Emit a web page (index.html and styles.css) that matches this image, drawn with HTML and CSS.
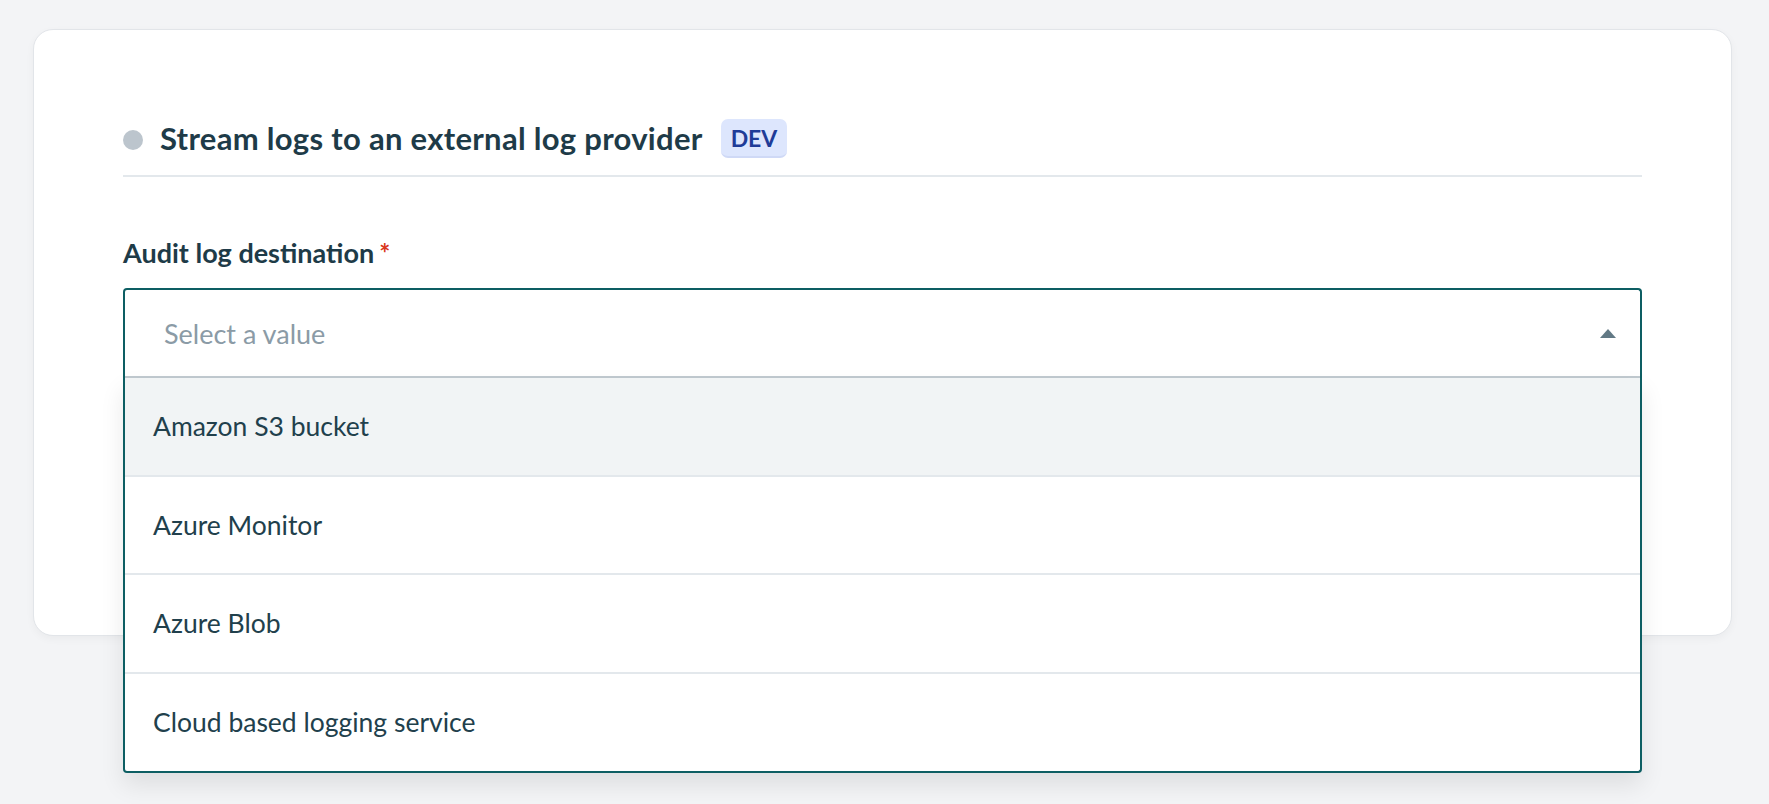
FILE: index.html
```html
<!DOCTYPE html>
<html lang="en">
<head>
<meta charset="utf-8">
<title>Stream logs</title>
<link rel="stylesheet" href="styles.css">
</head>
<body>
<main class="page">
  <section class="card">
    <header class="title-row">
      <span class="dot"></span>
      <h2 class="title">Stream logs to an external log provider</h2>
      <span class="badge">DEV</span>
    </header>
    <div class="field">
      <label class="label">Audit log destination<span class="req">*</span></label>
      <div class="select">
        <div class="control">
          <span class="placeholder">Select a value</span>
          <svg class="caret" width="16" height="9" viewBox="0 0 16 9"><path d="M0 9 L8 0 L16 9 Z" fill="#627985"/></svg>
        </div>
        <ul class="menu">
          <li class="option active">Amazon S3 bucket</li>
          <li class="option">Azure Monitor</li>
          <li class="option">Azure Blob</li>
          <li class="option">Cloud based logging service</li>
        </ul>
      </div>
    </div>
  </section>
</main>
</body>
</html>
```
FILE: styles.css
```css
* { box-sizing: border-box; }
html, body { margin: 0; padding: 0; }
body {
  background: #f3f4f6;
  font-family: Lato, "Liberation Sans", sans-serif;
  color: #22404c;
}
.page {
  min-height: 100vh;
  padding: 29px 37px 0 33px;
}
.card {
  background: #ffffff;
  border: 1px solid #e2e5e9;
  border-radius: 20px;
  box-shadow: 0 3px 8px rgba(0, 0, 0, 0.04);
  padding: 89px 89px 257px 89px;
}
.title-row {
  display: flex;
  align-items: center;
  height: 58px;
  padding-bottom: 17px;
  border-bottom: 2px solid #e3e8ec;
}
.dot {
  width: 20px;
  height: 20px;
  border-radius: 50%;
  background: #bcc5cd;
  flex: none;
  margin-top: 2px;
}
.title {
  margin: 0 0 0 17px;
  font-size: 31px;
  letter-spacing: 0.3px;
  font-weight: 700;
  color: #1e3b48;
  line-height: 39px;
}
.badge {
  margin-left: 18px;
  height: 39px;
  padding: 0 10px;
  display: flex;
  align-items: center;
  background: #dde6fd;
  border-bottom: 2px solid #cfd9f6;
  border-radius: 7px;
  color: #1f3c98;
  font-weight: 700;
  font-size: 23px;
}
.field {
  margin-top: 60px;
}
.label {
  display: block;
  height: 31px;
  font-size: 27px;
  font-weight: 700;
  line-height: 31px;
  color: #1e3b48;
  margin-bottom: 20px;
}
.req {
  color: #d9361c;
  margin-left: 5px;
  font-size: 26px;
}
.select {
  position: relative;
  border: 2px solid #0d5e63;
  border-bottom: none;
  border-radius: 4px 4px 0 0;
}
.control {
  height: 88px;
  display: flex;
  align-items: center;
  justify-content: space-between;
  padding: 0 24px 0 39px;
  border-bottom: 2px solid #c0c9cf;
}
.placeholder {
  font-size: 27px;
  color: #8b9ba6;
}
.caret { display: block; }
.menu {
  position: absolute;
  z-index: 10;
  top: 100%;
  left: -2px;
  right: -2px;
  margin: 0;
  padding: 0;
  list-style: none;
  background: #ffffff;
  border: 2px solid #0d5e63;
  border-top: none;
  border-radius: 0 0 4px 4px;
  box-shadow: 0 12px 24px rgba(0, 0, 0, 0.09);
}
.option {
  height: 98.5px;
  display: flex;
  align-items: center;
  padding-left: 28px;
  font-size: 26.5px;
  color: #21404c;
  border-bottom: 2px solid #e3e8ec;
}
.option:last-child { border-bottom: none; height: 97px; }
.option.active { background: #f1f4f5; }
```
